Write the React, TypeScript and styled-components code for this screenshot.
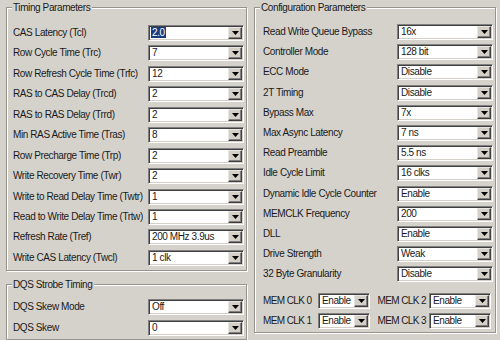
import React from 'react'
import styled, { createGlobalStyle } from 'styled-components'

const GlobalStyle = createGlobalStyle`
  body {
    margin: 0;
    background: #d5d2cc;
    font-family: "Liberation Sans", Arial, sans-serif;
    font-size: 10px;
    letter-spacing: -0.4px;
    color: #1a1a1a;
  }
  #root {
    width: 500px;
    height: 340px;
    overflow: hidden;
  }
`

const Page = styled.div`
  display: grid;
  grid-template-columns: 250px 250px;
  width: 500px;
  height: 340px;
`

const Column = styled.div<{ $pad: string }>`
  display: flex;
  flex-direction: column;
  gap: 13px;
  padding: ${p => p.$pad};
`

const Group = styled.div<{ $h: number; $pad: string }>`
  position: relative;
  box-sizing: border-box;
  height: ${p => p.$h}px;
  padding: ${p => p.$pad};
  border: 1px solid #96938d;
  box-shadow: inset 1px 1px 0 #fff, 1px 1px 0 #fff;
`

const Title = styled.span`
  position: absolute;
  top: -7px;
  left: 5px;
  padding: 0 2px 0 1px;
  line-height: 13px;
  background: #d5d2cc;
`

const Rows = styled.div<{ $gap: number }>`
  display: grid;
  grid-template-columns: 1fr 96px;
  grid-auto-rows: 16px;
  row-gap: ${p => p.$gap}px;
  align-items: center;
`

const Label = styled.span`
  white-space: nowrap;
  line-height: 16px;
`

const Combo = styled.div`
  box-sizing: border-box;
  display: flex;
  align-items: center;
  height: 16px;
  background: #fff;
  border: 1px solid;
  border-color: #808080 #fff #fff #808080;
  box-shadow: inset 1px 1px 0 #404040, inset -1px -1px 0 #d4d0c8;
  padding: 1px 1px 1px 2px;
`

const Value = styled.span<{ $selected?: boolean }>`
  flex: 1;
  white-space: nowrap;
  overflow: hidden;
  line-height: 12px;
  span {
    padding: 0 1px;
    background: ${p => (p.$selected ? '#1c3a7e' : 'transparent')};
    color: ${p => (p.$selected ? '#fff' : '#1a1a1a')};
  }
`

const DropButton = styled.div`
  box-sizing: border-box;
  width: 14px;
  height: 12px;
  display: flex;
  align-items: center;
  justify-content: center;
  background: #d4d0c8;
  border: 1px solid;
  border-color: #e8e6e2 #404040 #404040 #e8e6e2;
  box-shadow: inset -1px -1px 0 #808080;
`

const MemGrid = styled.div`
  display: grid;
  grid-template-columns: 55px 52px 59px 62px;
  grid-auto-rows: 16px;
  row-gap: 4px;
  align-items: center;
  margin-top: 11px;
`

const MemLabel = styled(Label)<{ $end?: boolean }>`
  letter-spacing: -0.6px;
  justify-self: ${p => (p.$end ? 'end' : 'start')};
  padding-right: ${p => (p.$end ? 3 : 0)}px;
`

function Select({ value, selected }: { value: string; selected?: boolean }) {
  return (
    <Combo>
      <Value $selected={selected}>
        <span>{value}</span>
      </Value>
      <DropButton>
        <svg width="7" height="4" viewBox="0 0 7 4">
          <polygon points="0,0 7,0 3.5,4" fill="#000" />
        </svg>
      </DropButton>
    </Combo>
  )
}

const timing: [string, string, boolean?][] = [
  ['CAS Latency (Tcl)', '2.0', true],
  ['Row Cycle Time (Trc)', '7'],
  ['Row Refresh Cycle Time (Trfc)', '12'],
  ['RAS to CAS Delay (Trcd)', '2'],
  ['RAS to RAS Delay (Trrd)', '2'],
  ['Min RAS Active Time (Tras)', '8'],
  ['Row Precharge Time (Trp)', '2'],
  ['Write Recovery Time (Twr)', '2'],
  ['Write to Read Delay Time (Twtr)', '1'],
  ['Read to Write Delay Time (Trtw)', '1'],
  ['Refresh Rate (Tref)', '200 MHz 3.9us'],
  ['Write CAS Latency (Twcl)', '1 clk'],
]

const dqs: [string, string][] = [
  ['DQS Skew Mode', 'Off'],
  ['DQS Skew', '0'],
]

const config: [string, string][] = [
  ['Read Write Queue Bypass', '16x'],
  ['Controller Mode', '128 bit'],
  ['ECC Mode', 'Disable'],
  ['2T Timing', 'Disable'],
  ['Bypass Max', '7x'],
  ['Max Async Latency', '7 ns'],
  ['Read Preamble', '5.5 ns'],
  ['Idle Cycle Limit', '16 clks'],
  ['Dynamic Idle Cycle Counter', 'Enable'],
  ['MEMCLK Frequency', '200'],
  ['DLL', 'Enable'],
  ['Drive Strength', 'Weak'],
  ['32 Byte Granularity', 'Disable'],
]

export default function App() {
  return (
    <>
      <GlobalStyle />
      <Page>
        <Column $pad="7px 3px 0 6px">
          <Group $h={264} $pad="17px 2px 0 6px">
            <Title>Timing Parameters</Title>
            <Rows $gap={4.45}>
              {timing.map(([label, value, sel]) => (
                <React.Fragment key={label}>
                  <Label>{label}</Label>
                  <Select value={value} selected={sel} />
                </React.Fragment>
              ))}
            </Rows>
          </Group>
          <Group $h={56} $pad="14px 2px 0 6px">
            <Title>DQS Strobe Timing</Title>
            <Rows $gap={4.5}>
              {dqs.map(([label, value]) => (
                <React.Fragment key={label}>
                  <Label>{label}</Label>
                  <Select value={value} />
                </React.Fragment>
              ))}
            </Rows>
          </Group>
        </Column>
        <Column $pad="7px 4px 0 4px">
          <Group $h={326} $pad="16px 2px 0 8px">
            <Title>Configuration Parameters</Title>
            <Rows $gap={4.2}>
              {config.map(([label, value]) => (
                <React.Fragment key={label}>
                  <Label>{label}</Label>
                  <Select value={value} />
                </React.Fragment>
              ))}
            </Rows>
            <MemGrid>
              <MemLabel>MEM CLK 0</MemLabel>
              <Select value="Enable" />
              <MemLabel $end>MEM CLK 2</MemLabel>
              <Select value="Enable" />
              <MemLabel>MEM CLK 1</MemLabel>
              <Select value="Enable" />
              <MemLabel $end>MEM CLK 3</MemLabel>
              <Select value="Enable" />
            </MemGrid>
          </Group>
        </Column>
      </Page>
    </>
  )
}
